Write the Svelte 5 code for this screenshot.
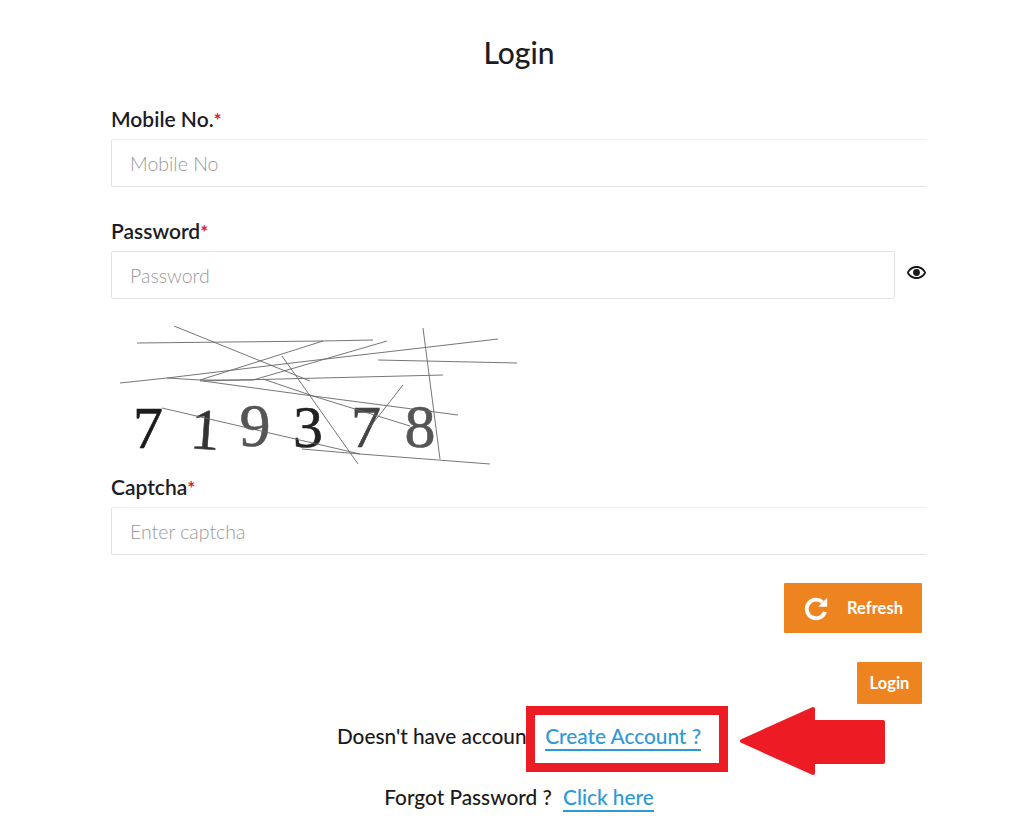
<script lang="ts">
    const lines = [
        '174,325 310,380',
        '137,342 323,340 373,339',
        '120,382 167,377 300,361 498,338',
        '378,359 517,362',
        '423,327 440,458',
        '167,377 200,379 323,340',
        '200,379 253,379 387,340',
        '200,380 443,374',
        '203,380 313,395 458,414',
        '263,378 313,395 410,425',
        '282,355 358,463',
        '403,384 370,426',
        '162,407 360,453 490,463',
        '302,448 360,453'
    ]

    const digits = [
        { char: '7', x: 148, y: 447, fill: '#1c1c1c', size: 60, rotate: 0 },
        { char: '1', x: 204, y: 448, fill: '#333', size: 58, rotate: 4 },
        { char: '9', x: 255, y: 445, fill: '#555', size: 62, rotate: 0 },
        { char: '3', x: 308, y: 446, fill: '#222', size: 60, rotate: 0 },
        { char: '7', x: 366, y: 446, fill: '#444', size: 60, rotate: 0 },
        { char: '8', x: 420, y: 446, fill: '#555', size: 62, rotate: 0 }
    ]
</script>

<main class="page">
    <h1>Login</h1>

    <label class="field" for="mobile">
        <span class="label">Mobile No.<i>*</i></span>
    </label>
    <input id="mobile" class="input open" placeholder="Mobile No" />

    <label class="field second" for="password">
        <span class="label">Password<i>*</i></span>
    </label>
    <div class="password-row">
        <input id="password" class="input" placeholder="Password" />
        <svg class="eye" viewBox="0 0 24 24" aria-hidden="true">
            <path fill="#1a1a1a" d="M12 4.500C7 4.500 2.700 7.600 1 12c1.700 4.400 6 7.500 11 7.500s9.300-3.100 11-7.500c-1.700-4.400-6-7.500-11-7.500zm0 12.700c-3.500 0-7-2-8.800-5.200C5 8.800 8.500 6.800 12 6.800s7 2 8.800 5.200c-1.800 3.200-5.300 5.200-8.800 5.200z" />
            <circle cx="12" cy="12" r="3.900" fill="#1a1a1a" />
        </svg>
    </div>

    <svg class="captcha" viewBox="111 322 420 145" aria-label="captcha image">
        {#each digits as d}
            <text
                x={d.x}
                y={d.y}
                fill={d.fill}
                stroke={d.fill}
                stroke-width="0.6"
                font-size={d.size}
                text-anchor="middle"
                font-family="'Liberation Serif', serif"
                transform="rotate({d.rotate} {d.x} {d.y})">{d.char}</text>
        {/each}
        {#each lines as points}
            <polyline {points} fill="none" stroke="#666" stroke-width="0.9" />
        {/each}
    </svg>

    <label class="field" for="captcha">
        <span class="label">Captcha<i>*</i></span>
    </label>
    <input id="captcha" class="input open" placeholder="Enter captcha" />

    <div class="actions">
        <button class="btn refresh" type="button">
            <svg viewBox="0 0 24 24" aria-hidden="true">
                <path fill="none" stroke="#fff" stroke-width="3.400" d="M19.500 15a8.300 8.300 0 1 1-2.200-8.700" />
                <path fill="#fff" d="M21.500 2.500v8h-8z" />
            </svg>
            Refresh
        </button>
        <button class="btn login" type="button">Login</button>
    </div>

    <p class="row create">
        Doesn't have account
        <span class="annotated">
            <span class="box"></span>
            <a href="#create">Create Account ?</a>
            <svg class="arrow" viewBox="0 0 148 70" aria-hidden="true">
                <path fill="#ed1c24" stroke="#ed1c24" stroke-width="4" stroke-linejoin="round" d="M3 35 74 3v13h70v40H74v11z" />
            </svg>
        </span>
    </p>

    <p class="row forgot">
        Forgot Password ?
        <a href="#forgot">Click here</a>
    </p>
</main>

<style>
    :global(body) {
        background: #fff;
        font-family: Lato, "Open Sans", sans-serif;
        color: #1c1c24;
    }

    .page {
        display: flex;
        flex-direction: column;
        box-sizing: border-box;
        width: 1024px;
        height: 831px;
        padding: 34px 97px 0 111px;
        overflow: hidden;
    }

    h1 {
        margin: 0 0 37px;
        font-size: 30px;
        line-height: 36px;
        font-weight: 500;
        text-align: center;
    }

    .field {
        display: block;
        height: 24px;
        margin-bottom: 8px;
    }

    .second {
        margin-top: 32px;
    }

    .label {
        font-size: 21px;
        line-height: 24px;
        font-weight: 600;
    }

    .label i {
        color: #d8232f;
        font-style: normal;
        font-weight: 700;
        font-size: 19px;
    }

    .input {
        display: block;
        box-sizing: border-box;
        width: 100%;
        height: 48px;
        padding: 0 18px;
        border: 1px solid #e2e2e2;
        border-radius: 2px;
        background: #fff;
        font-family: inherit;
        font-size: 19.500px;
        font-weight: 300;
        outline: none;
    }

    .input::placeholder {
        color: #999;
    }

    .input.open {
        border-right: none;
        border-top-color: #efefef;
    }

    .password-row {
        display: flex;
        align-items: center;
        gap: 11px;
    }

    .password-row .input {
        flex: 1;
    }

    .eye {
        flex: none;
        width: 21px;
        height: 21px;
        margin-bottom: 5px;
    }

    .captcha {
        display: block;
        width: 420px;
        height: 145px;
        margin-top: 24px;
        margin-bottom: 7px;
    }

    .actions {
        display: flex;
        flex-direction: column;
        align-items: flex-end;
        gap: 29px;
        margin-top: 28px;
        margin-right: 5px;
    }

    .btn {
        display: flex;
        align-items: center;
        justify-content: center;
        border: none;
        border-radius: 1px;
        background: #ee8420;
        color: #fff;
        font-family: inherit;
        font-size: 16.500px;
        font-weight: 700;
    }

    .refresh {
        gap: 17px;
        width: 138px;
        height: 50px;
    }

    .refresh svg {
        width: 27px;
        height: 27px;
    }

    .login {
        width: 65px;
        height: 42px;
    }

    .row {
        margin: 0;
        font-size: 20.800px;
        line-height: 28px;
        font-weight: 500;
        text-align: center;
        color: #1a1a1a;
        white-space: nowrap;
    }

    .create {
        margin-top: 18px;
    }

    .forgot {
        margin-top: 32px;
    }

    a {
        display: inline-block;
        margin-left: 6px;
        padding-bottom: 0;
        border-bottom: 2px solid #2b9ad6;
        color: #2b9ad6;
        text-decoration: none;
        line-height: 26px;
    }

    .annotated {
        position: relative;
        display: inline-block;
        margin-left: 6px;
    }

    .annotated a {
        position: relative;
        margin-left: 0;
    }

    .box {
        position: absolute;
        left: -19px;
        right: -27px;
        top: -16px;
        bottom: -21px;
        border: 9px solid #ed1c24;
        background: #fff;
    }

    .arrow {
        position: absolute;
        left: 194px;
        top: -16px;
        width: 148px;
        height: 70px;
    }
</style>
